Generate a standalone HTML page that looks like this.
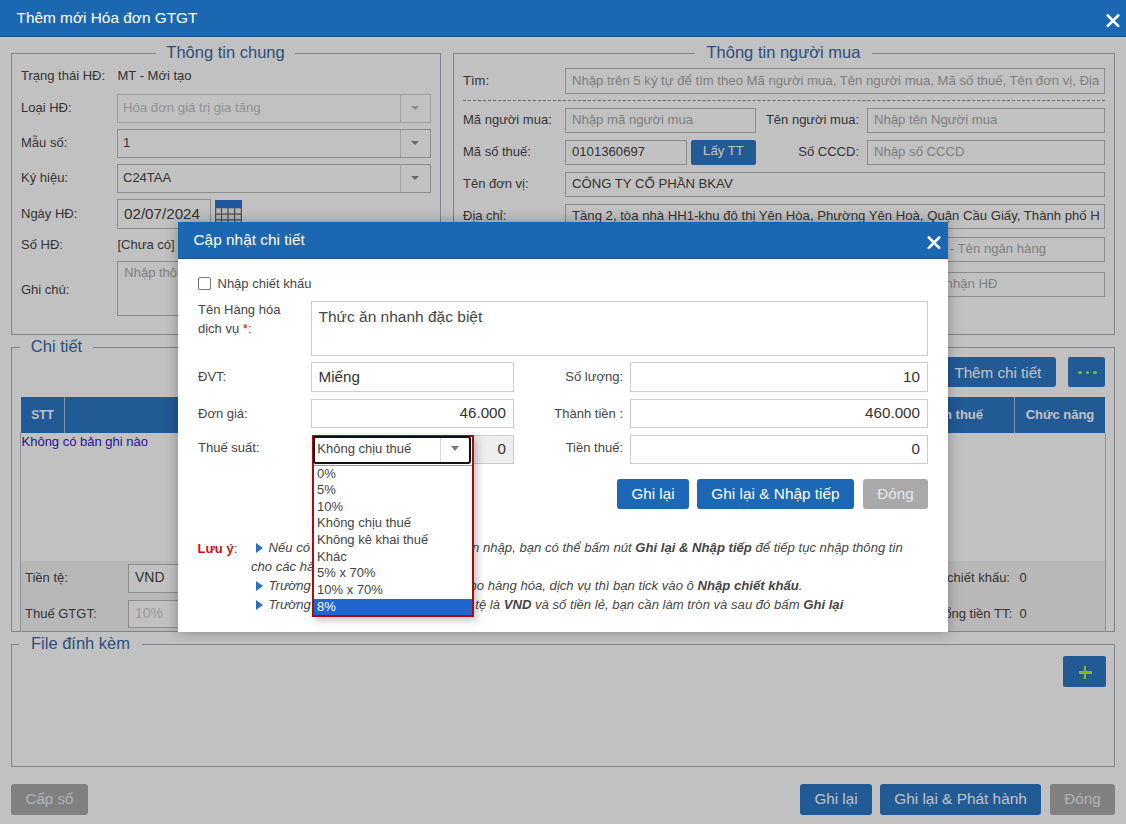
<!DOCTYPE html><html><head><meta charset="utf-8"><style>
html,body{margin:0;padding:0;}
body{width:1126px;height:824px;position:relative;overflow:hidden;background:#fff;font-family:"Liberation Sans",sans-serif;}
.t{position:absolute;white-space:nowrap;}
.b{position:absolute;box-sizing:border-box;}
.tri{position:absolute;width:0;height:0;}
</style></head><body>
<div class="b" style="left:11px;top:53px;width:430px;height:282px;border:1px solid #a9b1b9;"></div>
<div class="b" style="left:156px;top:51px;width:139px;height:5px;background:#fff;"></div>
<div class="t" style="left:-74.5px;width:600px;text-align:center;top:41.68px;font-size:16.5px;line-height:21px;color:#3a6aa8;">Thông tin chung</div>
<div class="t" style="left:21px;top:67.50px;font-size:13px;line-height:16px;color:#454545;">Trạng thái HĐ:</div>
<div class="t" style="left:117.5px;top:67.50px;font-size:13px;line-height:16px;color:#454545;">MT - Mới tạo</div>
<div class="t" style="left:21px;top:99.50px;font-size:13px;line-height:16px;color:#454545;">Loại HĐ:</div>
<div class="b" style="left:117px;top:94px;width:314px;height:29px;border:1px solid #d2d2d2;background:#fff;"></div>
<div class="b" style="left:400px;top:95px;width:1px;height:27px;background:#d6d6d6;"></div>
<div class="tri" style="left:411.1px;top:106.3px;border-left:4px solid transparent;border-right:4px solid transparent;border-top:4.5px solid #b4b4b4;"></div>
<div class="t" style="left:123px;top:99.83px;font-size:13.2px;line-height:16px;color:#c2c2c2;">Hóa đơn giá trị gia tăng</div>
<div class="t" style="left:21px;top:134.50px;font-size:13px;line-height:16px;color:#454545;">Mẫu số:</div>
<div class="b" style="left:117px;top:129px;width:314px;height:29px;border:1px solid #b9b9b9;background:#fff;"></div>
<div class="b" style="left:400px;top:130px;width:1px;height:27px;background:#d6d6d6;"></div>
<div class="tri" style="left:411.1px;top:141.3px;border-left:4px solid transparent;border-right:4px solid transparent;border-top:4.5px solid #8a8a8a;"></div>
<div class="t" style="left:123px;top:134.90px;font-size:13px;line-height:16px;color:#454545;">1</div>
<div class="t" style="left:21px;top:169.50px;font-size:13px;line-height:16px;color:#454545;">Ký hiệu:</div>
<div class="b" style="left:117px;top:164px;width:314px;height:29px;border:1px solid #b9b9b9;background:#fff;"></div>
<div class="b" style="left:400px;top:165px;width:1px;height:27px;background:#d6d6d6;"></div>
<div class="tri" style="left:411.1px;top:176.3px;border-left:4px solid transparent;border-right:4px solid transparent;border-top:4.5px solid #8a8a8a;"></div>
<div class="t" style="left:123px;top:169.90px;font-size:13px;line-height:16px;color:#454545;">C24TAA</div>
<div class="t" style="left:21px;top:205.50px;font-size:13px;line-height:16px;color:#454545;">Ngày HĐ:</div>
<div class="b" style="left:117px;top:199px;width:94px;height:30px;border:1px solid #b9b9b9;background:#fff;"></div>
<div class="t" style="left:124px;top:203.53px;font-size:15.2px;line-height:19px;color:#454545;">02/07/2024</div>
<svg style="position:absolute;left:215px;top:200px" width="27" height="26" viewBox="0 0 27 26">
<rect x="0" y="0" width="27" height="8.5" fill="#2a74d0"/>
<rect x="0" y="8.5" width="27" height="18" fill="#f2f2f2"/>
<g stroke="#6a6a6a" stroke-width="1.3" fill="none">
<path d="M0.6 8v18M6.5 8v18M13 8v18M19.6 8v18M26.4 8v18M0 14.2h27M0 19.8h27M0 25.5h27"/>
</g></svg>
<div class="t" style="left:21px;top:237.00px;font-size:13px;line-height:16px;color:#454545;">Số HĐ:</div>
<div class="t" style="left:117.5px;top:237.00px;font-size:13px;line-height:16px;color:#454545;">[Chưa có]</div>
<div class="t" style="left:21px;top:282.00px;font-size:13px;line-height:16px;color:#454545;">Ghi chú:</div>
<div class="b" style="left:117px;top:261px;width:314px;height:55px;border:1px solid #b9b9b9;background:#fff;"></div>
<div class="t" style="left:124.3px;top:264.50px;font-size:13px;line-height:16px;color:#a8a8a8;">Nhập thông tin ghi chú</div>
<div class="b" style="left:453px;top:53px;width:662px;height:282px;border:1px solid #a9b1b9;"></div>
<div class="b" style="left:695px;top:51px;width:177px;height:5px;background:#fff;"></div>
<div class="t" style="left:483.5px;width:600px;text-align:center;top:41.68px;font-size:16.5px;line-height:21px;color:#3a6aa8;">Thông tin người mua</div>
<div class="t" style="left:463px;top:72.50px;font-size:13px;line-height:16px;color:#454545;">Tìm:</div>
<div class="b" style="left:565px;top:68px;width:540px;height:26px;border:1px solid #b9b9b9;background:#fff;overflow:hidden;"><div class="b" style="left:0;top:0;right:4px;bottom:0;overflow:hidden;"><div class="t" style="left:6px;top:2.5px;font-size:13.15px;line-height:17px;color:#a8a8a8;">Nhập trên 5 ký tự để tìm theo Mã người mua, Tên người mua, Mã số thuế, Tên đơn vị, Địa chỉ</div></div></div>
<div class="b" style="left:463px;top:100px;width:642px;height:1px;border-top:1px dashed #888;"></div>
<div class="t" style="left:463px;top:112.00px;font-size:13px;line-height:16px;color:#454545;">Mã người mua:</div>
<div class="b" style="left:565px;top:108px;width:191px;height:25px;border:1px solid #b9b9b9;background:#fff;overflow:hidden;"><div class="b" style="left:0;top:0;right:4px;bottom:0;overflow:hidden;"><div class="t" style="left:6px;top:2.0px;font-size:13.15px;line-height:17px;color:#a8a8a8;">Nhập mã người mua</div></div></div>
<div class="t" style="right:267px;text-align:right;top:112.00px;font-size:13px;line-height:16px;color:#454545;">Tên người mua:</div>
<div class="b" style="left:867px;top:108px;width:238px;height:25px;border:1px solid #b9b9b9;background:#fff;overflow:hidden;"><div class="b" style="left:0;top:0;right:4px;bottom:0;overflow:hidden;"><div class="t" style="left:6px;top:2.0px;font-size:13.15px;line-height:17px;color:#a8a8a8;">Nhập tên Người mua</div></div></div>
<div class="t" style="left:463px;top:144.00px;font-size:13px;line-height:16px;color:#454545;">Mã số thuế:</div>
<div class="b" style="left:565px;top:140px;width:122px;height:25px;border:1px solid #b9b9b9;background:#fff;overflow:hidden;"><div class="b" style="left:0;top:0;right:4px;bottom:0;overflow:hidden;"><div class="t" style="left:6px;top:2.0px;font-size:13.15px;line-height:17px;color:#444;">0101360697</div></div></div>
<div class="b" style="left:691px;top:140px;width:65px;height:25px;background:#2e77c6;border-radius:2px;"></div>
<div class="t" style="left:423.5px;width:600px;text-align:center;top:143.43px;font-size:13.2px;line-height:16px;color:#fff;">Lấy TT</div>
<div class="t" style="right:267px;text-align:right;top:144.00px;font-size:13px;line-height:16px;color:#454545;">Số CCCD:</div>
<div class="b" style="left:867px;top:140px;width:238px;height:25px;border:1px solid #b9b9b9;background:#fff;overflow:hidden;"><div class="b" style="left:0;top:0;right:4px;bottom:0;overflow:hidden;"><div class="t" style="left:6px;top:2.0px;font-size:13.15px;line-height:17px;color:#a8a8a8;">Nhập số CCCD</div></div></div>
<div class="t" style="left:463px;top:176.00px;font-size:13px;line-height:16px;color:#454545;">Tên đơn vị:</div>
<div class="b" style="left:565px;top:172px;width:540px;height:25px;border:1px solid #b9b9b9;background:#fff;overflow:hidden;"><div class="b" style="left:0;top:0;right:4px;bottom:0;overflow:hidden;"><div class="t" style="left:6px;top:2.0px;font-size:13.15px;line-height:17px;color:#444;">CÔNG TY CỔ PHẦN BKAV</div></div></div>
<div class="t" style="left:463px;top:208.00px;font-size:13px;line-height:16px;color:#454545;">Địa chỉ:</div>
<div class="b" style="left:565px;top:204px;width:540px;height:25px;border:1px solid #b9b9b9;background:#fff;overflow:hidden;"><div class="b" style="left:0;top:0;right:4px;bottom:0;overflow:hidden;"><div class="t" style="left:6px;top:2.0px;font-size:13.15px;line-height:17px;color:#444;">Tầng 2, tòa nhà HH1-khu đô thị Yên Hòa, Phường Yên Hoà, Quận Cầu Giấy, Thành phố Hà Nội</div></div></div>
<div class="t" style="left:463px;top:241.00px;font-size:13px;line-height:16px;color:#454545;">Tài khoản NH:</div>
<div class="b" style="left:565px;top:237px;width:540px;height:25px;border:1px solid #b9b9b9;background:#fff;overflow:hidden;"><div class="b" style="left:0;top:0;right:4px;bottom:0;overflow:hidden;"><div class="t" style="right:54px;top:2.0px;font-size:13.15px;line-height:17px;color:#a8a8a8;">Nhập số tài khoản ngân hàng - Tên ngân hàng</div></div></div>
<div class="t" style="left:463px;top:276.00px;font-size:13px;line-height:16px;color:#454545;">Email nhận HĐ:</div>
<div class="b" style="left:565px;top:272px;width:540px;height:25px;border:1px solid #b9b9b9;background:#fff;overflow:hidden;"><div class="b" style="left:0;top:0;right:4px;bottom:0;overflow:hidden;"><div class="t" style="right:102.5px;top:2.0px;font-size:13.15px;line-height:17px;color:#a8a8a8;">Nhập email người nhận HĐ</div></div></div>
<div class="b" style="left:11px;top:347px;width:1104px;height:285px;border:1px solid #a9b1b9;"></div>
<div class="b" style="left:20px;top:345px;width:73px;height:5px;background:#fff;"></div>
<div class="t" style="left:-243.5px;width:600px;text-align:center;top:335.68px;font-size:16.5px;line-height:21px;color:#3a6aa8;">Chi tiết</div>
<div class="b" style="left:870px;top:357px;width:186px;height:30px;background:#2e77c6;border-radius:3px;"></div>
<div class="t" style="left:954.4px;top:362.73px;font-size:15.2px;line-height:19px;color:#fff;">Thêm chi tiết</div>
<div class="b" style="left:1068px;top:357px;width:37px;height:30px;background:#2e77c6;border-radius:2px;"></div>
<div class="b" style="left:1078.0px;top:370.6px;width:3.599999999999909px;height:3.599999999999966px;background:#9cf05a;border-radius:50%;"></div>
<div class="b" style="left:1085.6px;top:370.6px;width:3.599999999999909px;height:3.599999999999966px;background:#9cf05a;border-radius:50%;"></div>
<div class="b" style="left:1093.2px;top:370.6px;width:3.599999999999909px;height:3.599999999999966px;background:#9cf05a;border-radius:50%;"></div>
<div class="b" style="left:21px;top:397px;width:1084px;height:36px;background:#2e77c6;"></div>
<div class="b" style="left:64px;top:397px;width:1px;height:36px;background:#a9c4e3;"></div>
<div class="b" style="left:1014px;top:397px;width:1px;height:36px;background:#a9c4e3;"></div>
<div class="t" style="left:-257.5px;width:600px;text-align:center;top:407.84px;font-size:12px;line-height:15px;color:#fff;font-weight:bold;">STT</div>
<div class="t" style="left:760px;width:600px;text-align:center;top:407.00px;font-size:13px;line-height:16px;color:#fff;font-weight:bold;">Chức năng</div>
<div class="t" style="right:143px;text-align:right;top:407.00px;font-size:13px;line-height:16px;color:#fff;font-weight:bold;">Tiền thuế</div>
<div class="b" style="left:20px;top:433px;width:1086px;height:199px;border-left:1px solid #b8c2cc;border-right:1px solid #b8c2cc;"></div>
<div class="t" style="left:21.5px;top:433.70px;font-size:13px;line-height:16px;color:#3322cc;">Không có bản ghi nào</div>
<div class="b" style="left:21px;top:561px;width:1084px;height:70px;background:#f3f3f3;"></div>
<div class="t" style="left:25px;top:569.50px;font-size:13px;line-height:16px;color:#454545;">Tiền tệ:</div>
<div class="b" style="left:128px;top:564px;width:172px;height:29px;border:1px solid #b9b9b9;background:#fff;overflow:hidden;"><div class="b" style="left:0;top:0;right:4px;bottom:0;overflow:hidden;"><div class="t" style="left:6px;top:4.0px;font-size:14px;line-height:17px;color:#444;">VND</div></div></div>
<div class="t" style="left:25px;top:605.50px;font-size:13px;line-height:16px;color:#454545;">Thuế GTGT:</div>
<div class="b" style="left:128px;top:600px;width:172px;height:28px;border:1px solid #b9b9b9;background:#fff;overflow:hidden;"><div class="b" style="left:0;top:0;right:4px;bottom:0;overflow:hidden;"><div class="t" style="left:6px;top:3.5px;font-size:14px;line-height:17px;color:#cfcfcf;">10%</div></div></div>
<div class="t" style="right:116px;text-align:right;top:569.50px;font-size:13px;line-height:16px;color:#454545;">Tổng tiền chiết khấu:</div>
<div class="t" style="left:1019.5px;top:569.50px;font-size:13px;line-height:16px;color:#454545;">0</div>
<div class="t" style="right:114px;text-align:right;top:605.50px;font-size:13px;line-height:16px;color:#454545;">Tổng tiền TT:</div>
<div class="t" style="left:1019.5px;top:605.50px;font-size:13px;line-height:16px;color:#454545;">0</div>
<div class="b" style="left:11px;top:644px;width:1104px;height:123px;border:1px solid #a9b1b9;"></div>
<div class="b" style="left:19px;top:642px;width:123px;height:5px;background:#fff;"></div>
<div class="t" style="left:-219.5px;width:600px;text-align:center;top:632.68px;font-size:16.5px;line-height:21px;color:#3a6aa8;">File đính kèm</div>
<div class="b" style="left:1063px;top:656px;width:43px;height:31px;background:#2e77c6;border-radius:2px;"></div>
<div class="b" style="left:1079px;top:671px;width:12.5px;height:2.5px;background:#b0f22a;"></div>
<div class="b" style="left:1083.8px;top:666px;width:2.5px;height:13px;background:#b0f22a;"></div>
<div class="b" style="left:11px;top:784px;width:77px;height:31px;background:#a9a9a9;border-radius:3px;"></div>
<div class="t" style="left:-250.5px;width:600px;text-align:center;top:789.13px;font-size:15.2px;line-height:19px;color:#e8edf2;">Cấp số</div>
<div class="b" style="left:800px;top:784px;width:72px;height:31px;background:#2e77c6;border-radius:3px;"></div>
<div class="t" style="left:536.0px;width:600px;text-align:center;top:789.13px;font-size:15.2px;line-height:19px;color:#fff;">Ghi lại</div>
<div class="b" style="left:880px;top:784px;width:161px;height:31px;background:#2e77c6;border-radius:3px;"></div>
<div class="t" style="left:660.5px;width:600px;text-align:center;top:789.06px;font-size:15.4px;line-height:19px;color:#fff;">Ghi lại &amp; Phát hành</div>
<div class="b" style="left:1050px;top:784px;width:65px;height:31px;background:#a9a9a9;border-radius:3px;"></div>
<div class="t" style="left:782.5px;width:600px;text-align:center;top:789.13px;font-size:15.2px;line-height:19px;color:#e8edf2;">Đóng</div>
<div class="b" style="left:0px;top:0px;width:1126px;height:824px;background:rgba(0,0,0,0.245);"></div>
<div class="b" style="left:0px;top:0px;width:1126px;height:36px;background:#1b67b1;"></div>
<div class="b" style="left:0px;top:36px;width:1126px;height:1px;background:#1d538c;"></div>
<div class="b" style="left:0px;top:37px;width:1126px;height:1px;background:#b9cde0;"></div>
<div class="t" style="left:16.5px;top:8.16px;font-size:15.4px;line-height:19px;color:#fff;">Thêm mới Hóa đơn GTGT</div>
<svg style="position:absolute;left:1106px;top:13.5px" width="14" height="14" viewBox="0 0 14 14"><path d="M1.8 1.5L12.2 11.9M12.2 1.5L1.8 11.9" stroke="#fff" stroke-width="2.6" stroke-linecap="round"/></svg>
<div class="b" style="left:178px;top:222px;width:770px;height:410px;background:#fff;box-shadow:0 0 12px rgba(0,0,0,0.3);"></div>
<div class="b" style="left:178px;top:222px;width:770px;height:36px;background:#1b67b1;"></div>
<div class="b" style="left:178px;top:258px;width:770px;height:1px;background:#1d538c;"></div>
<div class="t" style="left:193.5px;top:230.16px;font-size:15.4px;line-height:19px;color:#fff;">Cập nhật chi tiết</div>
<svg style="position:absolute;left:927px;top:235.5px" width="14" height="14" viewBox="0 0 14 14"><path d="M1.8 1.5L12.2 11.9M12.2 1.5L1.8 11.9" stroke="#fff" stroke-width="2.6" stroke-linecap="round"/></svg>
<div class="b" style="left:198px;top:277px;width:13px;height:13px;border:1px solid #767676;border-radius:2px;background:#fff;"></div>
<div class="t" style="left:217.5px;top:275.50px;font-size:13px;line-height:16px;color:#454545;">Nhập chiết khấu</div>
<div class="t" style="left:198px;top:301.50px;font-size:13px;line-height:16px;color:#454545;">Tên Hàng hóa</div>
<div class="t" style="left:198px;top:320.50px;font-size:13px;line-height:16px;color:#454545;">dịch vụ <span style="color:#e00">*</span>:</div>
<div class="b" style="left:311px;top:301px;width:617px;height:55px;border:1px solid #cccccc;background:#fff;"></div>
<div class="t" style="left:318.5px;top:307.13px;font-size:15.5px;line-height:19px;color:#454545;">Thức ăn nhanh đặc biệt</div>
<div class="t" style="left:198px;top:368.50px;font-size:13px;line-height:16px;color:#454545;">ĐVT:</div>
<div class="b" style="left:311px;top:362px;width:203px;height:30px;border:1px solid #cccccc;background:#fff;"></div>
<div class="t" style="left:318.5px;top:366.53px;font-size:15.2px;line-height:19px;color:#333;">Miếng</div>
<div class="t" style="left:198px;top:406.00px;font-size:13px;line-height:16px;color:#454545;">Đơn giá:</div>
<div class="b" style="left:311px;top:399px;width:203px;height:29px;border:1px solid #cccccc;background:#fff;"></div>
<div class="t" style="right:620px;text-align:right;top:403.03px;font-size:15.2px;line-height:19px;color:#333;">46.000</div>
<div class="t" style="left:198px;top:440.00px;font-size:13px;line-height:16px;color:#454545;">Thuế suất:</div>
<div class="b" style="left:472px;top:435px;width:42px;height:29px;border:1px solid #cccccc;background:#eeeeee;"></div>
<div class="t" style="right:620px;text-align:right;top:439.03px;font-size:15.2px;line-height:19px;color:#333;">0</div>
<div class="t" style="right:503px;text-align:right;top:368.50px;font-size:13px;line-height:16px;color:#454545;">Số lượng:</div>
<div class="b" style="left:630px;top:362px;width:298px;height:30px;border:1px solid #cccccc;background:#fff;"></div>
<div class="t" style="right:206px;text-align:right;top:366.53px;font-size:15.2px;line-height:19px;color:#333;">10</div>
<div class="t" style="right:503px;text-align:right;top:406.00px;font-size:13px;line-height:16px;color:#454545;">Thành tiền :</div>
<div class="b" style="left:630px;top:399px;width:298px;height:29px;border:1px solid #cccccc;background:#fff;"></div>
<div class="t" style="right:206px;text-align:right;top:403.03px;font-size:15.2px;line-height:19px;color:#333;">460.000</div>
<div class="t" style="right:503px;text-align:right;top:440.00px;font-size:13px;line-height:16px;color:#454545;">Tiền thuế:</div>
<div class="b" style="left:630px;top:435px;width:298px;height:29px;border:1px solid #cccccc;background:#fff;"></div>
<div class="t" style="right:206px;text-align:right;top:439.03px;font-size:15.2px;line-height:19px;color:#333;">0</div>
<div class="b" style="left:617px;top:479px;width:72px;height:30px;background:#1c68b6;border-radius:3px;"></div>
<div class="t" style="left:353.0px;width:600px;text-align:center;top:483.63px;font-size:15.2px;line-height:19px;color:#fff;">Ghi lại</div>
<div class="b" style="left:697px;top:479px;width:157px;height:30px;background:#1c68b6;border-radius:3px;"></div>
<div class="t" style="left:475.5px;width:600px;text-align:center;top:483.56px;font-size:15.4px;line-height:19px;color:#fff;">Ghi lại &amp; Nhập tiếp</div>
<div class="b" style="left:863px;top:479px;width:65px;height:30px;background:#a9a9a9;border-radius:3px;"></div>
<div class="t" style="left:595.5px;width:600px;text-align:center;top:483.63px;font-size:15.2px;line-height:19px;color:#e4e9ee;">Đóng</div>
<div class="t" style="left:197.5px;top:541.00px;font-size:13px;line-height:16px;color:#454545;"><b style="color:#c8141c">Lưu ý</b>:</div>
<div class="tri" style="left:256px;top:542.7px;border-top:5px solid transparent;border-bottom:5px solid transparent;border-left:7px solid #2a6fc0;"></div>
<div class="t" style="left:268.5px;top:539.95px;font-size:13.12px;line-height:16px;color:#454545;font-style:italic;">Nếu có nhiều hàng hóa</div>
<div class="t" style="left:458.1931076923077px;top:539.95px;font-size:13.12px;line-height:16px;color:#454545;font-style:italic;">cần nhập, bạn có thể bấm nút <b>Ghi lại &amp; Nhập tiếp</b> để tiếp tục nhập thông tin</div>
<div class="t" style="left:251px;top:558.95px;font-size:13.12px;line-height:16px;color:#454545;font-style:italic;">cho các hàng hóa, dịch vụ khác</div>
<div class="tri" style="left:256px;top:580.8px;border-top:5px solid transparent;border-bottom:5px solid transparent;border-left:7px solid #2a6fc0;"></div>
<div class="t" style="left:268.5px;top:577.95px;font-size:13.12px;line-height:16px;color:#454545;font-style:italic;">Trường hợp có chiết</div>
<div class="t" style="left:430.7894769230769px;top:577.95px;font-size:13.12px;line-height:16px;color:#454545;font-style:italic;">khấu cho hàng hóa, dịch vụ thì bạn tick vào ô <b>Nhập chiết khấu</b>.</div>
<div class="tri" style="left:256px;top:599.5px;border-top:5px solid transparent;border-bottom:5px solid transparent;border-left:7px solid #2a6fc0;"></div>
<div class="t" style="left:268.5px;top:596.95px;font-size:13.12px;line-height:16px;color:#454545;font-style:italic;">Trường hợp loại</div>
<div class="t" style="left:450.5097230769231px;top:596.95px;font-size:13.12px;line-height:16px;color:#454545;font-style:italic;">tiền tệ là <b>VND</b> và số tiền lẻ, bạn cần làm tròn và sau đó bấm <b>Ghi lại</b></div>
<div class="b" style="left:312px;top:435px;width:162px;height:182px;border:2px solid #a50d12;background:#fff;box-shadow:3px 3px 8px rgba(0,0,0,0.25);"></div>
<div class="b" style="left:313px;top:436px;width:158px;height:28px;border:2px solid #111;border-radius:3px;background:#fff;"></div>
<div class="b" style="left:440px;top:438px;width:1px;height:24px;background:#d8d8d8;"></div>
<div class="tri" style="left:451px;top:446px;border-left:4.5px solid transparent;border-right:4.5px solid transparent;border-top:5px solid #777;"></div>
<div class="t" style="left:317.3px;top:440.50px;font-size:13px;line-height:16px;color:#454545;">Không chịu thuế</div>
<div class="b" style="left:314px;top:465px;width:158px;height:1px;background:#9a9a9a;"></div>
<div class="t" style="left:317px;top:465.50px;font-size:13px;line-height:16px;color:#454545;">0%</div>
<div class="t" style="left:317px;top:482.10px;font-size:13px;line-height:16px;color:#454545;">5%</div>
<div class="t" style="left:317px;top:498.70px;font-size:13px;line-height:16px;color:#454545;">10%</div>
<div class="t" style="left:317px;top:515.30px;font-size:13px;line-height:16px;color:#454545;">Không chịu thuế</div>
<div class="t" style="left:317px;top:531.90px;font-size:13px;line-height:16px;color:#454545;">Không kê khai thuế</div>
<div class="t" style="left:317px;top:548.50px;font-size:13px;line-height:16px;color:#454545;">Khác</div>
<div class="t" style="left:317px;top:565.10px;font-size:13px;line-height:16px;color:#454545;">5% x 70%</div>
<div class="t" style="left:317px;top:581.70px;font-size:13px;line-height:16px;color:#454545;">10% x 70%</div>
<div class="b" style="left:314px;top:599px;width:158px;height:16px;background:#1f66cf;"></div>
<div class="t" style="left:317px;top:598.50px;font-size:13px;line-height:16px;color:#fff;">8%</div>
</body></html>
